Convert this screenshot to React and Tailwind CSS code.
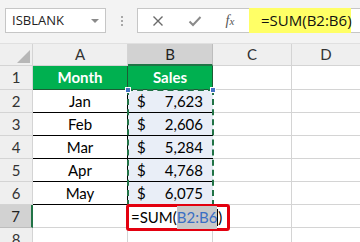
import React from "react";

const rows = [
  ["Jan", "7,623"],
  ["Feb", "2,606"],
  ["Mar", "5,284"],
  ["Apr", "4,768"],
  ["May", "6,075"],
];

function RowHead({ n, sel }) {
  return (
    <div
      className={
        "flex items-center justify-center border-b border-r text-[15px] " +
        (sel
          ? "bg-[#d2d2d2] text-[#222] border-b-[#bdbdbd] border-r-[#217346] border-r-2"
          : "bg-[#efefef] text-[#333] border-[#d4d4d4]")
      }
    >
      {n}
    </div>
  );
}

export default function App() {
  return (
    <div
      className="w-[360px] h-[242px] overflow-hidden bg-white text-black"
      style={{ fontFamily: "Lato, 'Noto Sans', sans-serif" }}
    >
      {/* Formula bar */}
      <div className="h-[44px] bg-[#f3f3f3] flex items-start pt-[8px] border-b border-[#e0e0e0]">
        <div
          className="ml-[5px] w-[101px] h-[25px] bg-white border border-[#c6c6c6] flex items-center justify-between pl-[6px] pr-[6px]"
          style={{ fontFamily: "'Open Sans', 'Noto Sans', sans-serif" }}
        >
          <span className="text-[13px] text-[#222]">ISBLANK</span>
          <span className="w-0 h-0 border-l-[4px] border-r-[4px] border-t-[4px] border-l-transparent border-r-transparent border-t-[#8a8a8a]" />
        </div>
        <div className="w-[31px] h-[25px] flex flex-col items-center justify-center gap-[2px]">
          <span className="w-[2px] h-[2px] bg-[#a8a8a8]" />
          <span className="w-[2px] h-[2px] bg-[#a8a8a8]" />
          <span className="w-[2px] h-[2px] bg-[#a8a8a8]" />
        </div>
        <div className="flex-1 h-[25px] bg-white border border-r-0 border-[#c6c6c6] flex items-center">
          <div className="w-[40px] flex justify-center">
            <svg width="12" height="12" viewBox="0 0 12 12">
              <path d="M1.5 1.5L10.5 10.5M10.5 1.5L1.5 10.5" stroke="#6a6a6a" strokeWidth="1.4" />
            </svg>
          </div>
          <div className="w-[33px] flex justify-center">
            <svg width="14" height="12" viewBox="0 0 14 12">
              <path d="M1.5 6.5L5 10L12.5 2" stroke="#8a8a8a" strokeWidth="2" fill="none" />
            </svg>
          </div>
          <div className="w[38px] w-[38px] flex justify-center">
            <span className="italic text-[14px] text-[#555]" style={{ fontFamily: "'Liberation Serif', serif" }}>
              f<span className="text-[11px]">x</span>
            </span>
          </div>
          <div
            className="w-[102px] h-[25px] -my-px bg-[#ffff66] flex items-center pl-[12px] text-[15px] text-[#111]"
            style={{ fontFamily: "'Open Sans', 'Noto Sans', sans-serif" }}
          >
            =SUM(B2:B6)
          </div>
        </div>
      </div>

      {/* Grid */}
      <div className="relative grid grid-cols-[33px_95px_85px_79px_1fr] grid-rows-[22px_24px_23px_23px_23px_23px_23px_23px_23px]">
        {/* header row */}
        <div className="bg-[#efefef] border-b border-r border-[#d4d4d4] flex items-end justify-end p-[2px]">
          <span className="w-0 h-0 border-l-[13px] border-t-[13px] border-l-transparent border-t-transparent border-b-0 border-r-0" style={{ borderBottom: "13px solid #b7b7b7", borderLeft: "13px solid transparent", borderTop: 0 }} />
        </div>
        <div className="bg-[#efefef] border-b border-r border-[#d4d4d4] flex items-center justify-center text-[15px] text-[#333]">A</div>
        <div className="bg-[#d2d2d2] border-b-2 border-b-[#217346] border-r border-r-[#bdbdbd] flex items-center justify-center text-[15px] text-[#222]">B</div>
        <div className="bg-[#efefef] border-b border-r border-[#d4d4d4] flex items-center justify-center text-[15px] text-[#333]">C</div>
        <div className="bg-[#efefef] border-b border-[#d4d4d4] flex items-center justify-center text-[15px] text-[#333]">D</div>

        {/* row 1 */}
        <RowHead n={1} />
        <div className="bg-[#00b050] border-b border-r border-[#1d5c34] flex items-center justify-center text-[15px] font-bold text-white">Month</div>
        <div className="bg-[#00b050] border-b border-r border-[#1d5c34] flex items-center justify-center text-[15px] font-bold text-white">Sales</div>
        <div className="border-b border-r border-[#d4d4d4]" />
        <div className="border-b border-[#d4d4d4]" />

        {rows.map(([m, v], i) => (
          <React.Fragment key={m}>
            <RowHead n={i + 2} />
            <div className="border-b border-r border-black flex items-center justify-center text-[15px]">{m}</div>
            <div className="bg-[#e9eef7] border-b border-black flex items-center justify-between pl-[9px] pr-[10px] text-[15px]">
              <span>$</span>
              <span>{v}</span>
            </div>
            <div className="border-b border-r border-[#d4d4d4]" />
            <div className="border-b border-[#d4d4d4]" />
          </React.Fragment>
        ))}

        {/* row 7 */}
        <RowHead n={7} sel />
        <div className="border-b border-r border-[#d4d4d4]" />
        <div className="border-b border-r border-[#d4d4d4]" />
        <div className="border-b border-r border-[#d4d4d4]" />
        <div className="border-b border-[#d4d4d4]" />

        {/* row 8 */}
        <RowHead n={8} />
        <div className="border-b border-r border-[#d4d4d4]" />
        <div className="border-b border-r border-[#d4d4d4]" />
        <div className="border-b border-r border-[#d4d4d4]" />
        <div className="border-b border-[#d4d4d4]" />

        {/* marching ants around B2:B6 */}
        <div className="absolute left-[127px] top-[45px] w-[87px] h-[117px] border-2 border-dashed border-[#217346] pointer-events-none" />
        <span className="absolute left-[125px] top-[43px] w-[6px] h-[6px] bg-[#4472c4] border border-white" />
        <span className="absolute left-[210px] top-[43px] w-[6px] h-[6px] bg-[#4472c4] border border-white" />

        {/* red box over B7 */}
        <div className="absolute left-[126px] top-[160px] w-[104px] h-[27px] border-[3px] border-[#e3000f] rounded-[3px] bg-white flex items-center pl-[2px] text-[15px]">
          <span>=SUM(</span>
          <span className="bg-[#c8c8c8] text-[#3a6fc4]">B2:B6</span>
          <span className="w-px h-[17px] bg-black" />
          <span>)</span>
        </div>
      </div>
    </div>
  );
}
